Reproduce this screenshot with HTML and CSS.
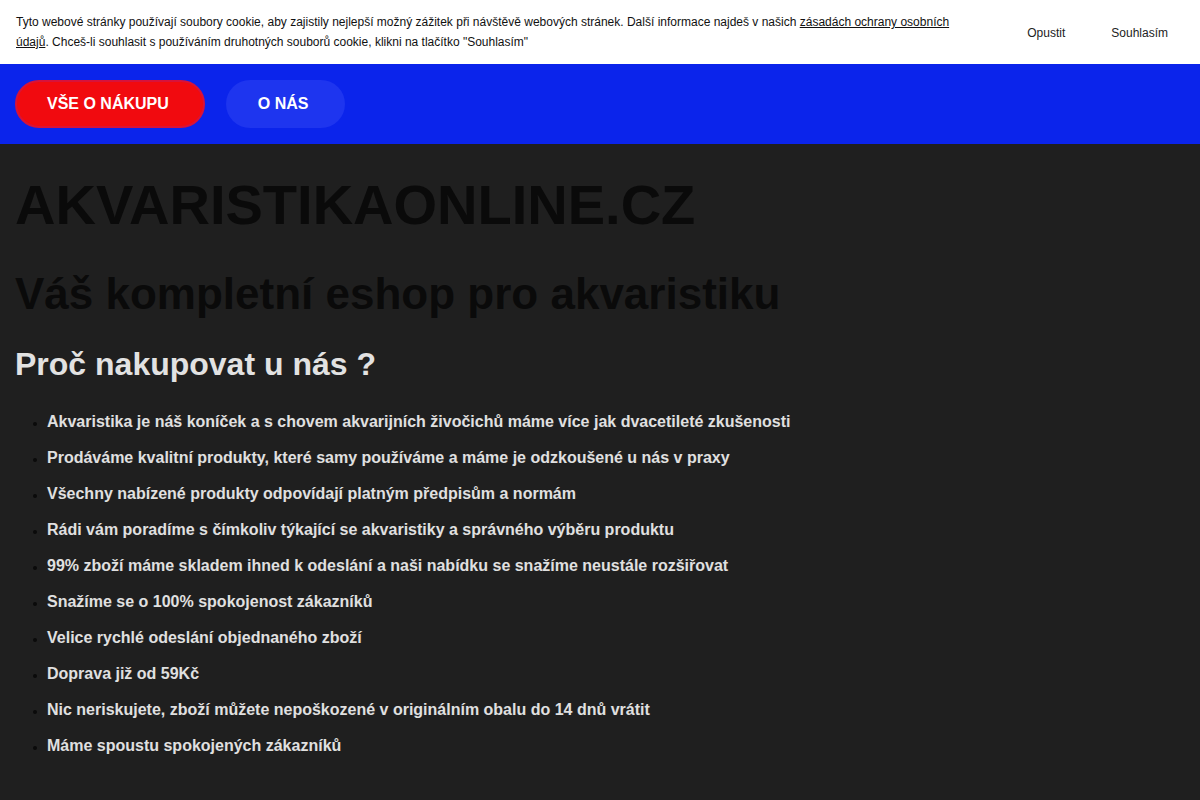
FILE: index.html
```
<!DOCTYPE html>
<html lang="cs">
<head>
<meta charset="utf-8">
<title>Akvaristikaonline.cz</title>
<link rel="stylesheet" href="styles.css">
</head>
<body>
<div class="cookie">
  <p class="cookie-text">Tyto webové stránky používají soubory cookie, aby zajistily nejlepší možný zážitek při návštěvě webových stránek. Další informace najdeš v našich <a href="#">zásadách ochrany osobních údajů</a>. Chceš-li souhlasit s používáním druhotných souborů cookie, klikni na tlačítko "Souhlasím"</p>
  <div class="cookie-actions">
    <button class="cookie-btn">Opustit</button>
    <button class="cookie-btn">Souhlasím</button>
  </div>
</div>
<nav class="nav">
  <a class="pill pill-red" href="#">VŠE O NÁKUPU</a>
  <a class="pill pill-blue" href="#">O NÁS</a>
</nav>
<main class="main">
  <h1 class="title">AKVARISTIKAONLINE.CZ</h1>
  <h2 class="subtitle">Váš kompletní eshop pro akvaristiku</h2>
  <h3 class="why">Proč nakupovat u nás ?</h3>
  <ul class="reasons">
    <li>Akvaristika je náš koníček a s chovem akvarijních živočichů máme více jak dvacetileté zkušenosti</li>
    <li>Prodáváme kvalitní produkty, které samy používáme a máme je odzkoušené u nás v praxy</li>
    <li>Všechny nabízené produkty odpovídají platným předpisům a normám</li>
    <li>Rádi vám poradíme s čímkoliv týkající se akvaristiky a správného výběru produktu</li>
    <li>99% zboží máme skladem ihned k odeslání a naši nabídku se snažíme neustále rozšiřovat</li>
    <li>Snažíme se o 100% spokojenost zákazníků</li>
    <li>Velice rychlé odeslání objednaného zboží</li>
    <li>Doprava již od 59Kč</li>
    <li>Nic neriskujete, zboží můžete nepoškozené v originálním obalu do 14 dnů vrátit</li>
    <li>Máme spoustu spokojených zákazníků</li>
  </ul>
</main>
</body>
</html>
```
FILE: styles.css
```
* { box-sizing: border-box; }
html, body {
  margin: 0;
  padding: 0;
  background: #1f1f1f;
  font-family: "Liberation Sans", Arial, sans-serif;
}
.cookie {
  background: #ffffff;
  height: 64px;
  display: flex;
  align-items: center;
  justify-content: space-between;
  padding: 0 16px;
}
.cookie-text {
  margin: 0;
  width: 945px;
  font-size: 12px;
  line-height: 20px;
  color: #111;
}
.cookie-text a { color: #111; text-decoration: underline; }
.cookie-actions {
  display: flex;
  align-items: center;
  margin-top: 1px;
}
.cookie-btn {
  background: none;
  border: none;
  font-family: "Liberation Sans", Arial, sans-serif;
  font-size: 12px;
  color: #222;
  padding: 8px 23px;
  cursor: pointer;
}
.cookie-btn:last-child { padding-right: 16px; }
.nav {
  background: #0b24eb;
  height: 80px;
  display: flex;
  align-items: center;
  gap: 21px;
  padding: 0 15px;
}
.pill {
  display: flex;
  align-items: center;
  justify-content: center;
  height: 48px;
  border-radius: 24px;
  padding: 0 34px 0 30px;
  border: 2px solid transparent;
  color: #fff;
  font-weight: bold;
  font-size: 16px;
  text-decoration: none;
}
.pill-red { background: #f10a0f; border-color: #d8123a; }
.pill-blue { background: #1e35ef; padding-right: 35px; }
.main { padding: 29px 15px 40px; }
.title {
  margin: 0 0 32px;
  font-size: 56px;
  line-height: 64px;
  color: #0a0a0a;
}
.subtitle {
  margin: 0 0 27px;
  font-size: 44px;
  line-height: 50px;
  color: #0a0a0a;
}
.why {
  margin: 0 0 21px;
  font-size: 32px;
  line-height: 37px;
  color: #e2e2e2;
}
.reasons {
  margin: 0;
  padding-left: 32px;
  list-style: disc;
}
.reasons li {
  font-size: 16px;
  font-weight: bold;
  line-height: 36px;
  color: #e0e0e0;
}
.reasons li::marker { color: #0a0a0a; font-size: 12px; }
```
